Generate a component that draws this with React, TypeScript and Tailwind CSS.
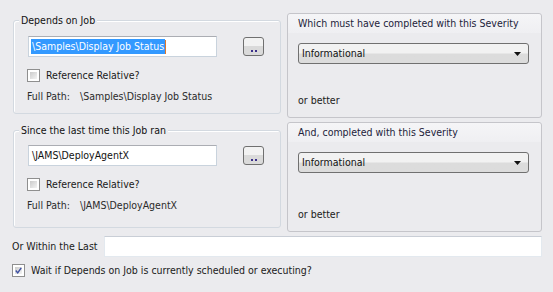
import React from "react";

const font = { fontFamily: "'DejaVu Sans Condensed', 'Liberation Sans', Arial, sans-serif" };

function Check({ checked = false }: { checked?: boolean }) {
  return (
    <div className="w-[13px] h-[13px] border border-[#8f8f8f] bg-white p-[2px] shrink-0">
      <div className="w-full h-full bg-gradient-to-br from-[#cbcbcb] to-[#f4f4f4] flex items-center justify-center">
        {checked && (
          <svg width="9" height="9" viewBox="0 0 9 9">
            <path d="M1 4.5 L3.5 7.5 L8 1" fill="none" stroke="#3d4fa3" strokeWidth="1.8" />
          </svg>
        )}
      </div>
    </div>
  );
}

function PathInput({ value, selected = false }: { value: string; selected?: boolean }) {
  return (
    <div className="w-[189px] h-[21px] bg-white border border-[#c9d3dd] border-t-[#abadb3] flex items-center pl-[2px]">
      {selected ? (
        <>
          <span className="bg-[#3399ff] text-white leading-[15px] px-px">{value}</span>
          <span className="w-px h-[14px] bg-[#e0782c]" />
        </>
      ) : (
        <span className="px-px text-[#111]">{value}</span>
      )}
    </div>
  );
}

function BrowseButton() {
  return (
    <div className="ml-[26px] mt-px w-[21px] h-[19px] rounded-[3px] border border-[#707070] bg-gradient-to-b from-[#f2f2f2] from-50% to-[#dadada] to-50% flex items-end justify-center pb-[3px]">
      <div className="flex gap-[2px]">
        <span className="w-[2px] h-[2px] bg-[#3b2f8a]" />
        <span className="w-[2px] h-[2px] bg-[#3b2f8a]" />
      </div>
    </div>
  );
}

function JobGroup({ title, value, selected, className }: { title: string; value: string; selected?: boolean; className: string }) {
  return (
    <div className={`relative w-[268px] rounded-[3px] border border-[#d3d9e0] shadow-[inset_1px_1px_0_#fff] pl-[14px] ${className}`}>
      <span className="absolute left-[5px] top-[-9px] px-[2px] bg-[#ebebee] text-[#111] leading-[16px]">{title}</span>
      <div className="flex items-start">
        <PathInput value={value} selected={selected} />
        <BrowseButton />
      </div>
      <div className="flex items-center mt-[11px] -ml-px gap-[6px]">
        <Check />
        <span className="text-[#1a1a1a]">Reference Relative?</span>
      </div>
      <div className="flex mt-[5px] -ml-px text-[#2a2a2a] leading-[14px]">
        <span className="w-[53px]">Full Path:</span>
        <span>{value}</span>
      </div>
    </div>
  );
}

function SeverityGroup({ title, className, gap }: { title: string; className: string; gap: string }) {
  return (
    <div className={`w-[255px] rounded-[3px] border border-[#c5c5ca] flex flex-col ${className}`}>
      <div className="h-[19px] bg-gradient-to-b from-[#f5f5f7] to-[#efeff2] flex items-center pl-[10px] text-[#22223a] rounded-t-[3px]">
        {title}
      </div>
      <div className="pl-[10px] pt-[10px]">
        <div className="w-[231px] h-[21px] rounded-[3px] border border-[#707070] bg-gradient-to-b from-[#f2f2f2] from-45% to-[#dcdcdc] to-55% flex items-center justify-between pl-[3px] pr-[7px] text-[#111]">
          <span>Informational</span>
          <svg width="7" height="4" viewBox="0 0 7 4">
            <path d="M0 0 H7 L3.5 4 Z" fill="#111" />
          </svg>
        </div>
      </div>
      <div className={`pl-[10px] ${gap} text-[#1a1a1a] leading-[14px]`}>or better</div>
    </div>
  );
}

export default function App() {
  return (
    <div className="w-[553px] h-[292px] bg-[#ebebee] text-[10.5px] overflow-hidden" style={font}>
      <div className="flex pl-[13px] gap-[6px]">
        <div className="flex flex-col">
          <JobGroup title="Depends on Job" value="\Samples\Display Job Status" selected className="mt-[20px] h-[94px] pt-[15px]" />
          <JobGroup title="Since the last time this Job ran" value="\JAMS\DeployAgentX" className="mt-[16px] h-[98px] pt-[14px]" />
        </div>
        <div className="flex flex-col">
          <SeverityGroup title="Which must have completed with this Severity" className="mt-[13px] h-[105px]" gap="mt-[29px]" />
          <SeverityGroup title="And, completed with this Severity" className="mt-[4px] h-[110px]" gap="mt-[34px]" />
        </div>
      </div>
      <div className="flex items-center mt-[4px] pl-[12px]">
        <span className="w-[92px] text-[#1a1a1a]">Or Within the Last</span>
        <div className="w-[438px] h-[21px] bg-white border border-[#e3e9ef] border-t-[#c9ced6]" />
      </div>
      <div className="flex items-center mt-[6px] pl-[12px] gap-[6px]">
        <Check checked />
        <span className="text-[#1a1a1a]">Wait if Depends on Job is currently scheduled or executing?</span>
      </div>
    </div>
  );
}
